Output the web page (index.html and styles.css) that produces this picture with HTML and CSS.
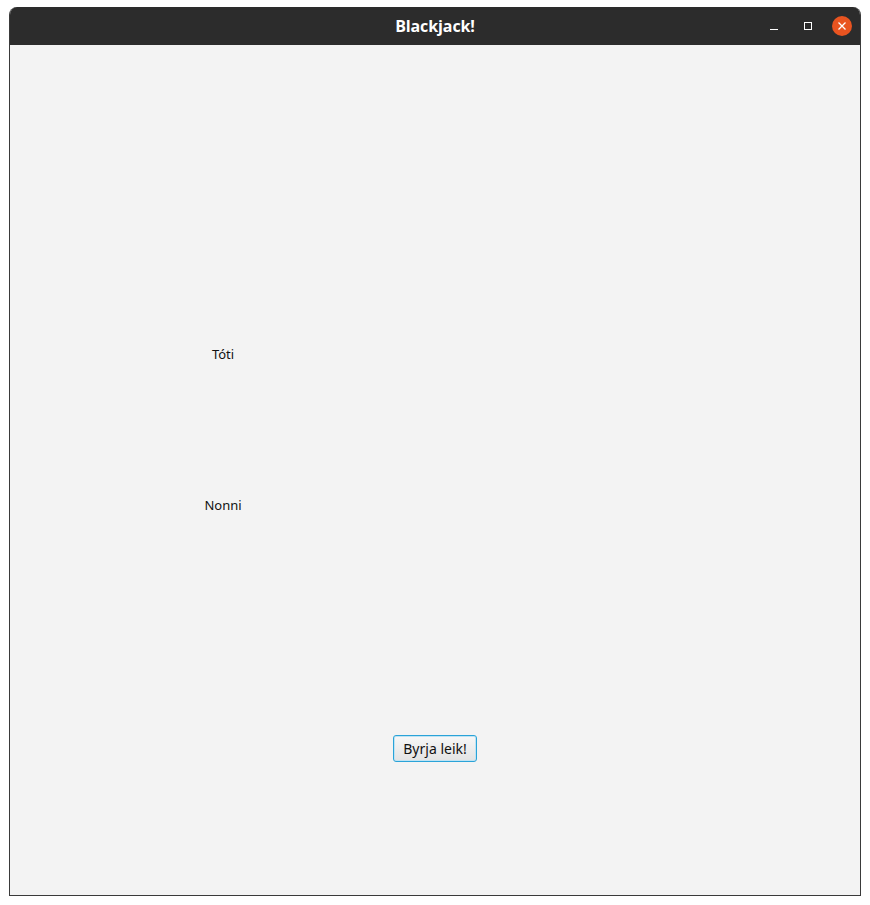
FILE: index.html
```html
<!DOCTYPE html>
<html>
<head>
<meta charset="utf-8">
<link rel="stylesheet" href="styles.css">
</head>
<body>
<div class="window">
  <div class="titlebar">
    <span class="title">Blackjack!</span>
    <div class="controls">
      <span class="ctl min"><svg width="10" height="10" viewBox="0 0 10 10"><path d="M1 8.5h8" stroke="#fff" stroke-width="1"/></svg></span>
      <span class="ctl max"><svg width="10" height="10" viewBox="0 0 10 10"><rect x="1.5" y="1.5" width="7" height="7" fill="none" stroke="#fff" stroke-width="1"/></svg></span>
      <span class="ctl close"><svg width="10" height="10" viewBox="0 0 10 10"><path d="M1.5 1.5l7 7M8.5 1.5l-7 7" stroke="#fff" stroke-width="1.3"/></svg></span>
    </div>
  </div>
  <div class="content">
    <div class="players">
      <div class="player toti">Tóti</div>
      <div class="player nonni">Nonni</div>
    </div>
    <div class="actions">
      <button class="start">Byrja leik!</button>
    </div>
  </div>
</div>
</body>
</html>
```

FILE: styles.css
```css
html, body {
  margin: 0;
  padding: 0;
  background: #ffffff;
}
body {
  padding: 7px 9px 9px 9px;
}
.window {
  width: 852px;
  height: 889px;
  box-sizing: border-box;
  border: 1px solid #3a3a3a;
  border-top: none;
  border-radius: 8px 8px 0 0;
  overflow: hidden;
  display: flex;
  flex-direction: column;
  background: #f3f3f3;
}
.titlebar {
  height: 38px;
  background: #2c2c2c;
  position: relative;
  display: flex;
  align-items: center;
  justify-content: center;
  flex-shrink: 0;
}
.title {
  color: #ffffff;
  font-family: "Open Sans", "DejaVu Sans", sans-serif;
  font-weight: 700;
  font-size: 16px;
  letter-spacing: -0.1px;
}
.controls {
  position: absolute;
  right: 8px;
  top: 9px;
  display: flex;
  gap: 14px;
  align-items: center;
}
.ctl {
  width: 20px;
  height: 20px;
  display: flex;
  align-items: center;
  justify-content: center;
}
.close {
  background: #e95420;
  border-radius: 50%;
}
.content {
  flex: 1;
  display: flex;
  flex-direction: column;
  font-family: "Noto Sans", "DejaVu Sans", sans-serif;
  font-size: 13px;
  color: #111111;
}
.players {
  width: 426px;
  display: flex;
  flex-direction: column;
  align-items: center;
  padding-top: 300px;
  gap: 132px;
}
.player {
  height: 19px;
  line-height: 19px;
}
.actions {
  display: flex;
  justify-content: center;
  padding-top: 220px;
}
.start {
  font-family: "Noto Sans", "DejaVu Sans", sans-serif;
  font-size: 14px;
  color: #111111;
  height: 27px;
  padding: 0 9px;
  border: 1px solid #2aa3d8;
  border-radius: 3px;
  background: linear-gradient(#f7f7f7, #e3e3e3);
  box-shadow: inset 0 0 0 1px #bfe3f3;
}
```
